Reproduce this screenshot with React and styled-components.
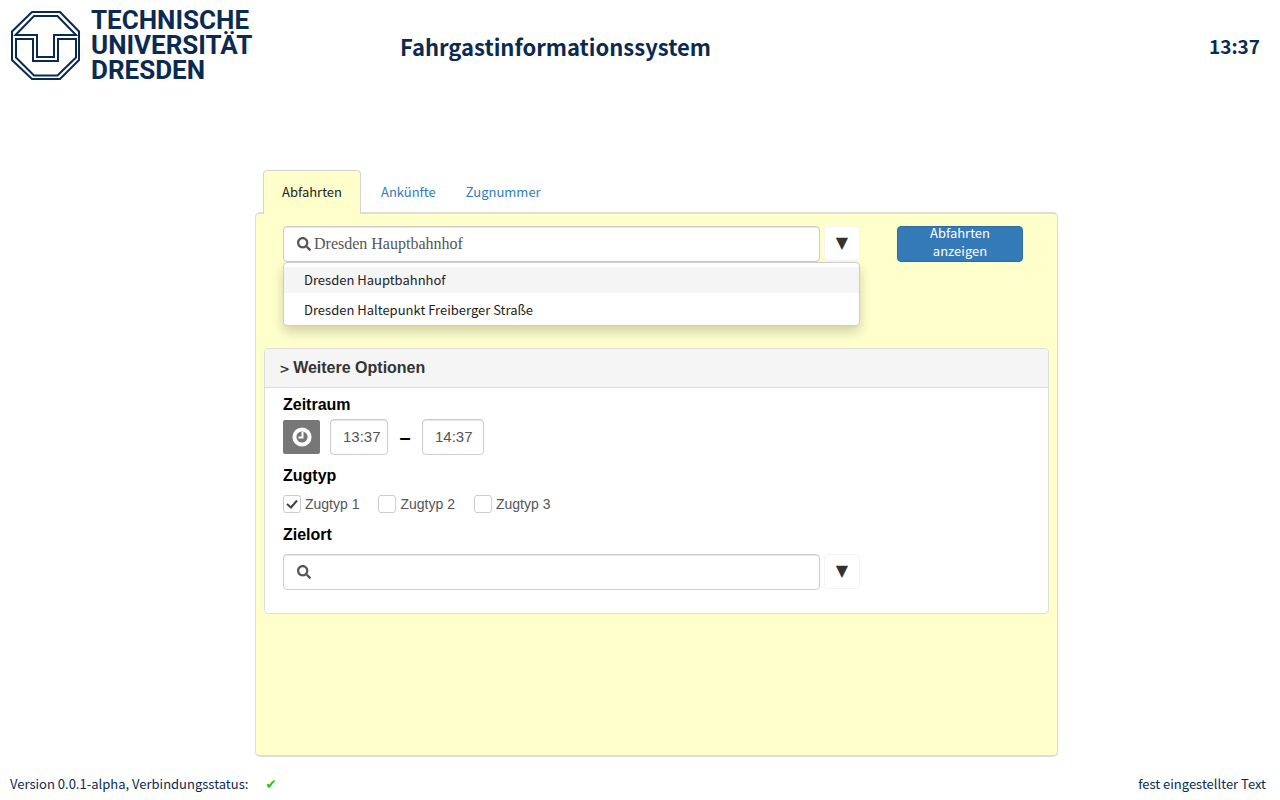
import React, { useState } from "react";
import styled, { createGlobalStyle } from "styled-components";
import { FaSearch } from "react-icons/fa";

const navy = "#0b2a51";
const link = "#337ab7";
const cream = "#ffffcc";
const line = "#dddddd";
const sourceSans = '"Noto Sans CJK SC", "Noto Sans", sans-serif';
const arial = '"Liberation Sans", Arial, sans-serif';

const GlobalStyle = createGlobalStyle`
  *, *::before, *::after { box-sizing: border-box; }
  body { margin: 0; background: #fff; color: #222; font: 400 13px/18px ${sourceSans}; }
  button, input { font: inherit; color: inherit; }
  h1, h2, h3, p, ul, fieldset { margin: 0; padding: 0; border: 0; }
`;

const Page = styled.div`
  min-height: 100vh;
  display: flex;
  flex-direction: column;
`;

const Header = styled.header`
  height: 90px;
  padding: 10px 20px 10px 10px;
  display: flex;
  align-items: center;
  color: ${navy};
`;

const Brand = styled.a`
  width: 390px;
  display: flex;
  align-items: center;
  gap: 10px;
  color: inherit;
  text-decoration: none;
`;

const Wordmark = styled.span`
  font: 700 26px/25px Roboto, sans-serif;
`;

const WordLine = styled.span`
  display: block;
`;

const Title = styled.h1`
  flex: 1;
  padding-top: 2px;
  font-size: 22px;
  line-height: 30px;
  font-weight: 700;
`;

const Clock = styled.time`
  padding-top: 2px;
  font-size: 19px;
  line-height: 24px;
  font-weight: 700;
`;

const Main = styled.main`
  flex: 1;
  display: flex;
  flex-direction: column;
  padding: 80px 222px 0 255px;
`;

const Tabs = styled.div`
  display: flex;
  padding-left: 8px;
  margin-bottom: -2px;
  z-index: 1;
`;

const Tab = styled.button`
  height: 44px;
  padding: 0 ${(p) => (p.$active ? 18 : 14)}px 2px;
  margin-right: ${(p) => (p.$active ? 5 : 0)}px;
  border: 1px solid ${(p) => (p.$active ? "#d4d4d4" : "transparent")};
  border-bottom: 0;
  border-radius: 4px 4px 0 0;
  background: ${(p) => (p.$active ? cream : "transparent")};
  color: ${(p) => (p.$active ? "#222" : link)};
  cursor: pointer;
`;

const Panel = styled.section`
  flex: 1;
  padding: 12px 8px;
  border: 1px solid ${line};
  border-top-width: 2px;
  border-bottom-width: 2px;
  border-radius: 5px;
  background: ${cream};
`;

const SearchRow = styled.form`
  display: flex;
  padding: 0 26px 0 19px;
  gap: 37px;
  margin-bottom: 86px;
`;

const Combo = styled.div`
  position: relative;
  flex: 1;
  display: flex;
  gap: 4px;
`;

const Field = styled.label`
  flex: 1;
  height: 36px;
  display: flex;
  align-items: center;
  gap: 3px;
  padding: 0 13px;
  border: 1px solid #ccc;
  border-radius: 4px;
  background: #fff;
  box-shadow: inset 0 1px 1px rgba(0, 0, 0, 0.1);
  color: #555;
`;

const FieldInput = styled.input`
  flex: 1;
  min-width: 0;
  padding: 0;
  border: 0;
  outline: 0;
  background: transparent;
  font: 400 16px/20px "Liberation Serif", "Times New Roman", serif;
`;

const Arrow = styled.button`
  width: 36px;
  height: 35px;
  padding: 0 0 2px;
  border: 1px solid #f4f4f4;
  border-radius: 4px;
  background: #fff;
  color: #333;
  font: 16px/20px "DejaVu Sans", sans-serif;
  cursor: pointer;
`;

const Submit = styled.button`
  width: 126px;
  height: 36px;
  display: flex;
  align-items: flex-end;
  justify-content: center;
  padding: 0 20px 1px;
  border: 1px solid #2e6da4;
  border-radius: 4px;
  background: ${link};
  color: #fff;
  line-height: 18px;
  cursor: pointer;
`;

const Menu = styled.ul`
  position: absolute;
  top: 100%;
  left: 0;
  right: 0;
  display: grid;
  gap: 4px;
  padding: 4px 0 2px;
  border: 1px solid #ccc;
  border-radius: 4px;
  background: #fff;
  box-shadow: 0 6px 12px rgba(0, 0, 0, 0.18);
  list-style: none;
`;

const MenuItem = styled.li`
  padding: 0 20px;
  line-height: 26px;
  background: ${(p) => (p.$active ? "#f5f5f5" : "transparent")};
`;

const Card = styled.section`
  border: 1px solid ${line};
  border-radius: 4px;
  background: #fff;
`;

const CardHead = styled.button`
  width: 100%;
  height: 39px;
  display: flex;
  align-items: center;
  gap: 4px;
  padding: 0 15px;
  border: 0;
  border-bottom: 1px solid ${line};
  border-radius: 3px 3px 0 0;
  background: #f5f5f5;
  color: #333;
  font: 700 16px/20px ${arial};
  cursor: pointer;
`;

const Chevron = styled.span`
  font: 500 16px/20px ${sourceSans};
`;

const CardBody = styled.div`
  padding: 7px 188px 23px 18px;
`;

const Heading = styled.h3`
  color: #000;
  font: 700 16px/20px ${arial};
`;

const Times = styled.div`
  display: flex;
  align-items: center;
  gap: 10px;
  padding: 4px 0 11px;
`;

const Destination = styled.div`
  display: flex;
  padding-top: 9px;
`;

const ClockButton = styled.button`
  width: 37px;
  height: 34px;
  display: grid;
  place-items: center;
  padding: 0;
  border: 0;
  border-radius: 2px;
  background: #777;
  cursor: pointer;
`;

const TimeInput = styled.input`
  width: ${(p) => p.$width}px;
  height: 36px;
  padding: 0 0 2px 12px;
  border: 1px solid #ccc;
  border-radius: 4px;
  background: #fff;
  box-shadow: inset 0 1px 1px rgba(0, 0, 0, 0.1);
  color: #555;
  font: 400 15px/20px ${arial};
`;

const Dash = styled.span`
  width: 14px;
  text-align: center;
  color: #000;
  font: 700 20px/20px ${arial};
`;

const Checks = styled.div`
  display: flex;
  gap: 19px;
  padding: 9px 0 12px;
`;

const Check = styled.label`
  display: flex;
  align-items: center;
  gap: 4px;
  color: #555;
  font: 400 14px/18px ${arial};
`;

const CheckBox = styled.span`
  display: grid;
  width: 18px;
  height: 18px;

  & > * { grid-area: 1 / 1; }
  & > svg { visibility: hidden; pointer-events: none; }
  & > input:checked + svg { visibility: visible; }
`;

const CheckInput = styled.input`
  appearance: none;
  width: 18px;
  height: 18px;
  margin: 0;
  border: 1px solid #ccc;
  border-radius: 3px;
  background: #fff;
`;

const Footer = styled.footer`
  height: 43px;
  display: flex;
  align-items: center;
  justify-content: space-between;
  padding: 10px 14px 0 10px;
  color: ${navy};
`;

const Status = styled.span`
  margin-left: 17px;
  color: #2fc410;
  font: 14px/18px "DejaVu Sans", sans-serif;
`;

function Logo() {
  return (
    <svg width="71" height="71" viewBox="0 0 71 71" fill="none" stroke={navy} strokeWidth="2">
      <path d="M22 2H50L69 21.5V50L50 69H22L2 50V21.5Z" />
      <path d="M5.5 25L24 6H47.5L66 25H44V47H27V25Z" />
      <path d="M6 29H23V51H48V29H66V47.5L47.5 65.5H24L6 47.5Z" />
    </svg>
  );
}

function SearchField({ label, value, onChange, children }) {
  return (
    <Combo>
      <Field>
        <FaSearch size={14} />
        <FieldInput aria-label={label} value={value} onChange={(e) => onChange(e.target.value)} />
      </Field>
      <Arrow type="button" aria-label="Liste öffnen">▼</Arrow>
      {children}
    </Combo>
  );
}

const tabs = ["Abfahrten", "Ankünfte", "Zugnummer"];
const stations = ["Dresden Hauptbahnhof", "Dresden Haltepunkt Freiberger Straße"];
const trainTypes = ["Zugtyp 1", "Zugtyp 2", "Zugtyp 3"];

export default function App() {
  const [tab, setTab] = useState(0);
  const [station, setStation] = useState(stations[0]);
  const [target, setTarget] = useState("");

  return (
    <Page>
      <GlobalStyle />
      <Header>
        <Brand href="#">
          <Logo />
          <Wordmark>
            <WordLine>TECHNISCHE</WordLine>
            <WordLine>UNIVERSITÄT</WordLine>
            <WordLine>DRESDEN</WordLine>
          </Wordmark>
        </Brand>
        <Title>Fahrgastinformationssystem</Title>
        <Clock>13:37</Clock>
      </Header>

      <Main>
        <Tabs role="tablist">
          {tabs.map((name, i) => (
            <Tab key={name} role="tab" aria-selected={i === tab} $active={i === tab} onClick={() => setTab(i)}>
              {name}
            </Tab>
          ))}
        </Tabs>
        <Panel>
          <SearchRow onSubmit={(e) => e.preventDefault()}>
            <SearchField label="Bahnhof" value={station} onChange={setStation}>
              <Menu role="listbox">
                {stations.map((name, i) => (
                  <MenuItem key={name} role="option" aria-selected={i === 0} $active={i === 0} onClick={() => setStation(name)}>
                    {name}
                  </MenuItem>
                ))}
              </Menu>
            </SearchField>
            <Submit>Abfahrten anzeigen</Submit>
          </SearchRow>

          <Card>
            <CardHead type="button" aria-expanded="true">
              <Chevron>&gt;</Chevron>
              Weitere Optionen
            </CardHead>
            <CardBody>
              <Heading>Zeitraum</Heading>
              <Times>
                <ClockButton type="button" aria-label="Zeit wählen">
                  <svg width="20" height="20" viewBox="0 0 20 20" fill="none" stroke="#fff">
                    <circle cx="10" cy="10" r="7.6" strokeWidth="4" />
                    <path d="M10.5 5V10.5H6.5" strokeWidth="2" />
                  </svg>
                </ClockButton>
                <TimeInput $width={58} aria-label="Von" defaultValue="13:37" />
                <Dash>–</Dash>
                <TimeInput $width={62} aria-label="Bis" defaultValue="14:37" />
              </Times>
              <Heading>Zugtyp</Heading>
              <Checks>
                {trainTypes.map((name, i) => (
                  <Check key={name}>
                    <CheckBox>
                      <CheckInput type="checkbox" defaultChecked={i === 0} />
                      <svg width="18" height="18" viewBox="0 0 18 18" fill="none" stroke="#444" strokeWidth="2">
                        <path d="M4 9L8 12.5L14 5.5" />
                      </svg>
                    </CheckBox>
                    {name}
                  </Check>
                ))}
              </Checks>
              <Heading>Zielort</Heading>
              <Destination>
                <SearchField label="Zielort" value={target} onChange={setTarget} />
              </Destination>
            </CardBody>
          </Card>
        </Panel>
      </Main>

      <Footer>
        <p>
          Version 0.0.1-alpha, Verbindungsstatus:
          <Status>✔</Status>
        </p>
        <p>fest eingestellter Text</p>
      </Footer>
    </Page>
  );
}
